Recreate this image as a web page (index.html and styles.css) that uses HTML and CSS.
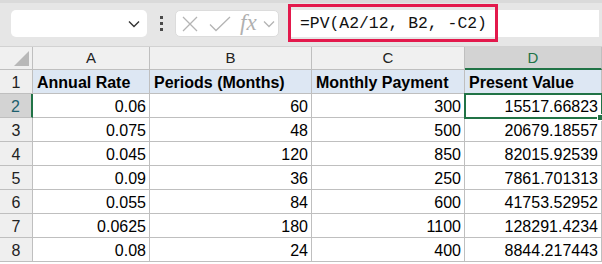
FILE: index.html
```html
<!DOCTYPE html>
<html lang="en">
<head>
    <meta charset="UTF-8">
    <title>PV formula</title>
    <link rel="stylesheet" href="styles.css">
</head>
<body>
    <div class="toolbar">
        <div class="namebox">
            <svg class="chev" width="12" height="8" viewBox="0 0 12 8"><path d="M1 1.5 L6 6.5 L11 1.5" fill="none" stroke="#333" stroke-width="1.4"/></svg>
        </div>
        <div class="grip"><span></span><span></span><span></span></div>
        <div class="fnbox">
            <svg class="ico-x" width="16" height="16" viewBox="0 0 16 16"><path d="M1 1 L15 15 M15 1 L1 15" stroke="#b4b4b4" stroke-width="1.3"/></svg>
            <svg class="ico-ok" width="22" height="16" viewBox="0 0 22 16"><path d="M1 8.5 L7 14.5 L21 1" fill="none" stroke="#b4b4b4" stroke-width="1.3"/></svg>
            <span class="fx">fx</span>
            <svg class="ico-down" width="12" height="8" viewBox="0 0 12 8"><path d="M1 1.5 L6 6.5 L11 1.5" fill="none" stroke="#b4b4b4" stroke-width="1.3"/></svg>
        </div>
        <div class="formula">
            <span class="formula-text">=PV(A2/12, B2, -C2)</span>
            <div class="highlight"></div>
        </div>
    </div>

    <div class="sheet">
        <div class="corner"><div class="tri"></div></div>
        <div class="colhead">A</div>
        <div class="colhead">B</div>
        <div class="colhead">C</div>
        <div class="colhead active">D</div>

        <div class="rowhead">1</div>
        <div class="cell label">Annual Rate</div>
        <div class="cell label">Periods (Months)</div>
        <div class="cell label">Monthly Payment</div>
        <div class="cell label">Present Value</div>

        <div class="rowhead active">2</div>
        <div class="cell num">0.06</div>
        <div class="cell num">60</div>
        <div class="cell num">300</div>
        <div class="cell num selected">15517.66823</div>

        <div class="rowhead">3</div>
        <div class="cell num">0.075</div>
        <div class="cell num">48</div>
        <div class="cell num">500</div>
        <div class="cell num">20679.18557</div>

        <div class="rowhead">4</div>
        <div class="cell num">0.045</div>
        <div class="cell num">120</div>
        <div class="cell num">850</div>
        <div class="cell num">82015.92539</div>

        <div class="rowhead">5</div>
        <div class="cell num">0.09</div>
        <div class="cell num">36</div>
        <div class="cell num">250</div>
        <div class="cell num">7861.701313</div>

        <div class="rowhead">6</div>
        <div class="cell num">0.055</div>
        <div class="cell num">84</div>
        <div class="cell num">600</div>
        <div class="cell num">41753.52952</div>

        <div class="rowhead">7</div>
        <div class="cell num">0.0625</div>
        <div class="cell num">180</div>
        <div class="cell num">1100</div>
        <div class="cell num">128291.4234</div>

        <div class="rowhead">8</div>
        <div class="cell num">0.08</div>
        <div class="cell num">24</div>
        <div class="cell num">400</div>
        <div class="cell num">8844.217443</div>
    </div>
</body>
</html>
```

FILE: styles.css
```css
* {
    box-sizing: border-box;
}

body {
    margin: 0;
    font-family: "Liberation Sans", Arial, sans-serif;
    background-color: white;
    overflow: hidden;
}

/* barra de fórmulas */
.toolbar {
    height: 47px;
    display: flex;
    align-items: flex-start;
    padding: 7px 0 0 11px;
    background-color: #e6e6e6;
    border-top: 3px solid #dadada;
    border-bottom: 1px solid #d2d2d2;
}

.namebox {
    width: 136px;
    height: 27px;
    background-color: white;
    border-radius: 5px;
    display: flex;
    align-items: center;
    justify-content: flex-end;
    padding-right: 7px;
}

.grip {
    width: 3px;
    margin: 0 12px 0 13px;
    height: 27px;
    display: flex;
    flex-direction: column;
    justify-content: center;
    gap: 3px;
}

.grip span {
    display: block;
    width: 3px;
    height: 3px;
    background-color: #4a4a4a;
}

.fnbox {
    width: 104px;
    height: 27px;
    background-color: white;
    border: 1px solid #dcdcdc;
    border-radius: 5px;
    display: flex;
    align-items: center;
    padding-left: 6px;
}

.ico-ok {
    margin-left: 11px;
}

.fx {
    font-family: "Liberation Serif", serif;
    font-style: italic;
    font-size: 23px;
    color: #b0b0b0;
    line-height: 1;
    margin: 0 0 3px 9px;
}

.ico-down {
    margin-left: 6px;
}

.formula {
    position: relative;
    width: 311px;
    height: 27px;
    margin-left: 9px;
    background-color: white;
    display: flex;
    align-items: center;
    padding-left: 12px;
}

.formula-text {
    font-family: "Liberation Mono", monospace;
    font-size: 16.4px;
    color: #111;
}

.highlight {
    position: absolute;
    left: 0;
    top: -6px;
    width: 210px;
    height: 38px;
    border: 3px solid #e3194c;
}

/* planilha */
.sheet {
    display: grid;
    grid-template-columns: 33px 117px 162px 153px 137px;
    grid-template-rows: 23px repeat(8, 24px);
    font-size: 16px;
    color: #000;
}

.corner,
.colhead,
.rowhead,
.cell {
    border-right: 1px solid #bfbfbf;
    border-bottom: 1px solid #bfbfbf;
}

.corner {
    background-color: #f0f0f0;
    position: relative;
}

.tri {
    position: absolute;
    right: 3px;
    bottom: 3px;
    width: 0;
    height: 0;
    border-left: 15px solid transparent;
    border-bottom: 15px solid #b8b8b8;
}

.colhead {
    background-color: #f0f0f0;
    text-align: center;
    font-size: 15px;
    line-height: 22px;
    color: #222;
}

.colhead.active {
    background-color: #d3d3d3;
    color: #217346;
    border-bottom: 2px solid #217346;
}

.rowhead {
    background-color: #efefef;
    text-align: center;
    line-height: 20px;
    padding-top: 3px;
    color: #222;
}

.rowhead.active {
    background-color: #d3d3d3;
    color: #1d5f6e;
    border-right: 2px solid #217346;
}

.cell {
    line-height: 20px;
    padding: 3px 3px 0 4px;
    white-space: nowrap;
}

.label {
    background-color: #dde7f3;
    font-weight: bold;
}

.num {
    text-align: right;
}

.selected {
    position: relative;
    outline: 2px solid #217346;
    outline-offset: -1px;
    z-index: 1;
}

.selected::after {
    content: "";
    position: absolute;
    right: -3px;
    bottom: -4px;
    width: 5px;
    height: 5px;
    background-color: #217346;
    border: 1px solid white;
}
```
